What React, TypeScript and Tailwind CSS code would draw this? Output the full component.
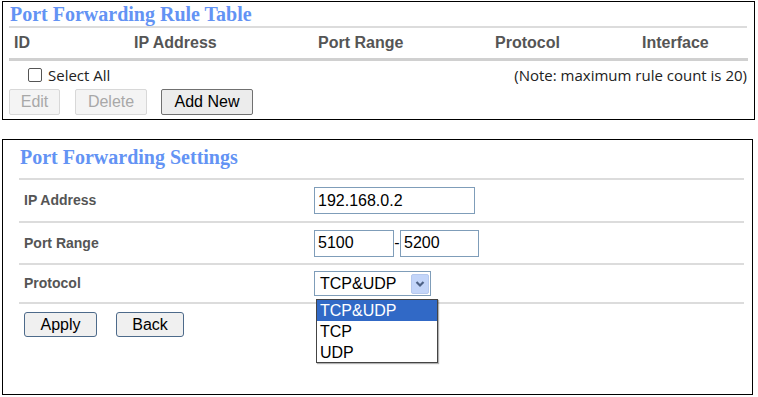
const headers = [
  { label: "ID", w: "w-[120px]" },
  { label: "IP Address", w: "w-[184px]" },
  { label: "Port Range", w: "w-[177px]" },
  { label: "Protocol", w: "w-[147px]" },
  { label: "Interface", w: "" },
];

const fields = [
  { label: "IP Address", h: "h-[41px]" },
  { label: "Port Range", h: "h-[40px]" },
  { label: "Protocol", h: "h-[37px]" },
];

const Chevron = () => (
  <svg width="10" height="8" viewBox="0 0 10 8">
    <path d="M1.5 2 L5 5.5 L8.5 2" stroke="#4d6185" strokeWidth="2.2" fill="none" />
  </svg>
);

const App = () => {
  return (
    <div className="w-[758px] h-[397px] bg-white relative font-['Liberation_Sans',sans-serif]">
      {/* rule table */}
      <div className="ml-[2px] mt-[1px] w-[753px] h-[119px] border-[1.5px] border-black px-[6px]">
        <h2 className="font-['Liberation_Serif',serif] font-bold text-[20px] leading-[24px] text-[#6393f4] pl-[1px]">
          Port Forwarding Rule Table
        </h2>
        <div className="h-[2px] bg-[#dcdcdc] mr-[1px]" />
        <div className="flex h-[30px] items-center pl-[5px] text-[16px] text-[#555] font-semibold">
          {headers.map(({ label, w }) => (
            <div key={label} className={w}>
              {label}
            </div>
          ))}
        </div>
        <div className="h-[3px] bg-[#d0d0d0]" />
        <div className="flex items-center justify-between h-[28px] font-['Open_Sans',sans-serif] text-[15px] text-[#222]">
          <label className="flex items-center gap-[6px] pl-[19px]">
            <span className="w-[14px] h-[14px] border border-[#555] rounded-[2px] bg-white" />
            Select All
          </label>
          <span className="pr-[1px]">(Note: maximum rule count is 20)</span>
        </div>
        <div className="flex text-[16px]">
          <button className="h-[26px] w-[51px] border border-[#d8d8d8] rounded-[2px] bg-[#f4f4f4] text-[#a8a8a8]">
            Edit
          </button>
          <button className="ml-[15px] h-[26px] w-[72px] border border-[#d8d8d8] rounded-[2px] bg-[#f4f4f4] text-[#a8a8a8]">
            Delete
          </button>
          <button className="ml-[14px] h-[26px] w-[92px] border border-[#707070] rounded-[2px] bg-[#ececec] text-black">
            Add New
          </button>
        </div>
      </div>

      {/* settings */}
      <div className="ml-[2px] mt-[19px] w-[751px] h-[256px] border-[1.5px] border-black pl-[16px] pr-[8px]">
        <h2 className="font-['Liberation_Serif',serif] font-bold text-[20px] leading-[24px] text-[#6393f4] pt-[5px] pb-[9px] pl-[1px]">
          Port Forwarding Settings
        </h2>
        {fields.map(({ label: f, h }) => (
          <div key={f}>
            <div className="h-[2px] bg-[#dcdcdc]" />
            <div className={`flex items-center ${h}`}>
              <div className="w-[295px] pl-[5px] text-[14px] font-semibold text-[#555]">{f}</div>
              {f === "IP Address" && (
                <div className="h-[27px] w-[161px] border border-[#7f9db9] px-[3px] flex items-center text-[16px] text-black">
                  192.168.0.2
                </div>
              )}
              {f === "Port Range" && (
                <div className="flex items-center text-[16px] text-black">
                  <div className="h-[27px] w-[80px] border border-[#7f9db9] px-[3px] flex items-center">5100</div>
                  <span className="w-[6px] text-center">-</span>
                  <div className="h-[27px] w-[79px] border border-[#7f9db9] px-[3px] flex items-center">5200</div>
                </div>
              )}
              {f === "Protocol" && (
                <div className="h-[25px] w-[117px] border border-[#7f9db9] flex items-center justify-between pl-[5px] pr-[1px] text-[16px] text-black">
                  TCP&amp;UDP
                  <span className="w-[18px] h-[20px] bg-[#c3d5f9] border border-[#b6c9ee] rounded-[2px] flex items-center justify-center">
                    <Chevron />
                  </span>
                </div>
              )}
            </div>
          </div>
        ))}
        <div className="h-[2px] bg-[#dcdcdc]" />
        <div className="flex gap-[19px] pt-[8px] pl-[5px] text-[16px]">
          <button className="h-[25px] w-[73px] border border-[#4d6a8a] rounded-[3px] bg-[#f0f0f0] text-black">
            Apply
          </button>
          <button className="h-[25px] w-[68px] border border-[#4d6a8a] rounded-[3px] bg-[#f0f0f0] text-black">
            Back
          </button>
        </div>
      </div>

      {/* open select list */}
      <div className="absolute left-[316px] top-[298px] w-[122px] h-[64px] border border-[#444] bg-white text-[16px] leading-[21px] text-black shadow-[1px_1px_1px_rgba(0,0,0,0.3)]">
        <div className="bg-[#3169c6] text-white pl-[3px]">TCP&amp;UDP</div>
        <div className="pl-[3px]">TCP</div>
        <div className="pl-[3px]">UDP</div>
      </div>
    </div>
  );
};

export default App;
